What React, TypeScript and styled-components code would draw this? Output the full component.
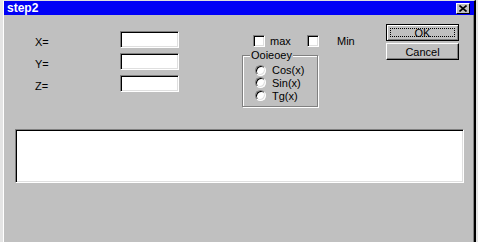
import * as React from "react";
import styled, { createGlobalStyle } from "styled-components";

const GlobalStyle = createGlobalStyle`
	body {
		margin: 0;
		background: #e4e4e4;
		font-family: "Liberation Sans", Arial, sans-serif;
		font-size: 11px;
		color: #000;
	}
`;

const Window = styled.div`
	margin-left: 3px;
	width: 470px;
	height: 241px;
	background: #c0c0c0;
	border-top: 1px solid #dfdfdf;
	border-left: 1px solid #fff;
	border-right: 2px solid #000;
	box-shadow: inset -1px 0 0 #808080;
	overflow: hidden;
`;

const TitleBar = styled.div`
	height: 14px;
	background: #0000f6;
	display: flex;
	align-items: center;
	justify-content: space-between;
	padding: 0 4px 0 3px;
	color: #fff;
	font-weight: bold;
	font-size: 12px;
`;

const CloseButton = styled.div`
	width: 12px;
	height: 9px;
	background: #c0c0c0;
	border: 1px solid;
	border-color: #fff #000 #000 #fff;
	display: flex;
	align-items: center;
	justify-content: center;
`;

const Body = styled.div`
	display: flex;
	flex-direction: column;
`;

const Top = styled.div`
	display: flex;
	align-items: flex-start;
`;

const Fields = styled.div`
	display: grid;
	grid-template-columns: 85px 59px;
	row-gap: 5px;
	padding: 16px 0 0 31px;
	width: 144px;
`;

const Label = styled.div`
	height: 17px;
	line-height: 17px;
	padding-top: 3px;
	box-sizing: border-box;
`;

const Sunken = styled.div<{ $h: number }>`
	box-sizing: border-box;
	height: ${(p) => p.$h}px;
	background: #fff;
	border: 1px solid;
	border-color: #808080 #fff #fff #808080;
	box-shadow: inset 1px 1px 0 #000, inset -1px -1px 0 #dfdfdf;
`;

const Options = styled.div`
	margin-left: 63px;
	width: 144px;
	padding-top: 20px;
`;

const CheckRow = styled.div`
	display: flex;
	height: 12px;
	padding-left: 11px;
`;

const CheckItem = styled.label<{ $w?: number; $gap: number }>`
	display: flex;
	align-items: center;
	gap: ${(p) => p.$gap}px;
	width: ${(p) => (p.$w ? `${p.$w}px` : "auto")};
	height: 12px;
`;

const CheckBox = styled.span`
	box-sizing: border-box;
	width: 12px;
	height: 12px;
	background: #fff;
	border: 1px solid;
	border-color: #808080 #fff #fff #808080;
	box-shadow: inset 1px 1px 0 #000, inset -1px -1px 0 #dfdfdf;
`;

const Group = styled.div`
	position: relative;
	box-sizing: border-box;
	margin-top: 8px;
	width: 76px;
	height: 52px;
	border: 1px solid #808080;
	box-shadow: inset 1px 1px 0 #fff, 1px 1px 0 #fff;
	padding: 8px 0 0 12px;
`;

const Legend = styled.span`
	position: absolute;
	top: -7px;
	left: 7px;
	padding: 0 1px;
	line-height: 13px;
	background: #c0c0c0;
`;

const RadioRow = styled.div`
	display: flex;
	align-items: center;
	gap: 6px;
	height: 13.5px;
	margin-top: -0.75px;
`;

const Radio = styled.span`
	box-sizing: border-box;
	width: 11px;
	height: 11px;
	border-radius: 50%;
	background: #fff;
	border: 1px solid;
	border-color: #808080 #fff #fff #808080;
	box-shadow: inset 1px 1px 0 #000, inset -1px -1px 0 #dfdfdf;
`;

const Buttons = styled.div`
	display: flex;
	flex-direction: column;
	gap: 2px;
	padding-top: 9px;
	width: 73px;
`;

const Button = styled.div<{ $default?: boolean }>`
	position: relative;
	box-sizing: border-box;
	height: 17px;
	display: flex;
	align-items: center;
	justify-content: center;
	background: #c0c0c0;
	border: 1px solid;
	border-color: ${(p) => (p.$default ? "#000" : "#fff #000 #000 #fff")};
	box-shadow: ${(p) =>
		p.$default
			? "inset 1px 1px 0 #fff, inset -1px -1px 0 #808080"
			: "inset -1px -1px 0 #808080"};

	&::after {
		content: "";
		display: ${(p) => (p.$default ? "block" : "none")};
		position: absolute;
		inset: 3px;
		border: 1px dotted #000;
	}
`;

const Output = styled(Sunken)`
	margin: 22px 0 0 11px;
	width: 449px;
`;

export default function App() {
	const fields = ["X=", "Y=", "Z="];
	const funcs = ["Cos(x)", "Sin(x)", "Tg(x)"];

	return (
		<>
			<GlobalStyle />
			<Window>
				<TitleBar>
					<span>step2</span>
					<CloseButton>
						<svg width="8" height="7" viewBox="0 0 8 7">
							<path d="M0.5 0.5 L7.5 6.5 M7.5 0.5 L0.5 6.5" stroke="#000" strokeWidth="1.6" />
						</svg>
					</CloseButton>
				</TitleBar>
				<Body>
					<Top>
						<Fields>
							{fields.map((f) => (
								<React.Fragment key={f}>
									<Label>{f}</Label>
									<Sunken $h={17} />
								</React.Fragment>
							))}
						</Fields>
						<Options>
							<CheckRow>
								<CheckItem $w={54} $gap={5}>
									<CheckBox />
									max
								</CheckItem>
								<CheckItem $gap={18}>
									<CheckBox />
									Min
								</CheckItem>
							</CheckRow>
							<Group>
								<Legend>Ooieoey</Legend>
								{funcs.map((f) => (
									<RadioRow key={f}>
										<Radio />
										{f}
									</RadioRow>
								))}
							</Group>
						</Options>
						<Buttons>
							<Button $default>OK</Button>
							<Button>Cancel</Button>
						</Buttons>
					</Top>
					<Output $h={54} />
				</Body>
			</Window>
		</>
	);
}
